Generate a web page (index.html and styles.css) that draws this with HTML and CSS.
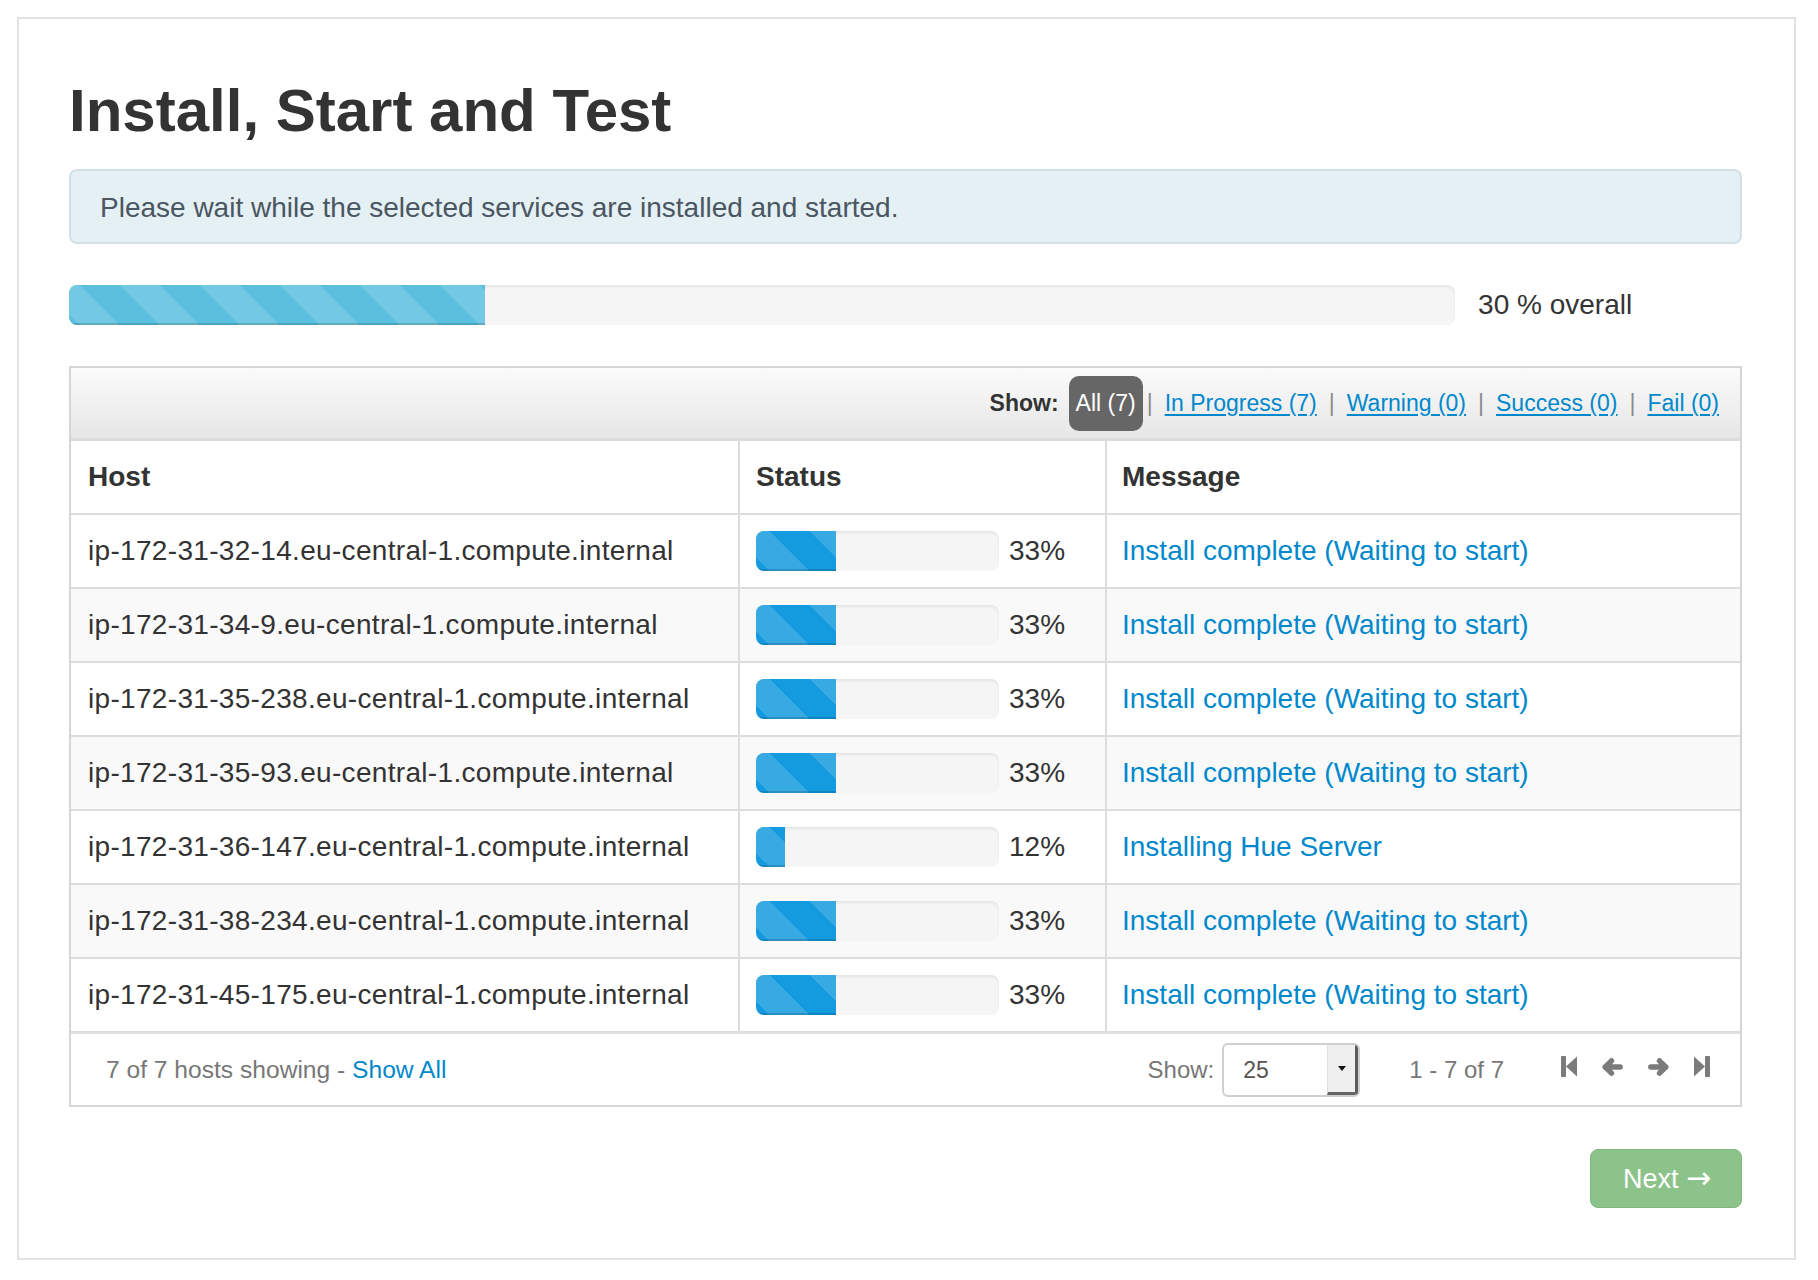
FILE: index.html
```html
<!DOCTYPE html>
<html lang="en">
<head>
<meta charset="utf-8">
<title>Install, Start and Test</title>
<link rel="stylesheet" href="styles.css">
</head>
<body>
<div class="page">
  <h2 class="title">Install, Start and Test</h2>
  <div class="alert">Please wait while the selected services are installed and started.</div>

  <div class="overall">
    <div class="progress progress-lg"><div class="bar bar-info" style="width:30%"></div></div>
    <div class="overall-label">30 % overall</div>
  </div>

  <div class="box">
    <div class="filter">
      <span class="show">Show:</span>
      <span class="badge">All (7)</span>
      <span class="sep sep-first">|</span>
      <a class="flink" href="#">In Progress (7)</a>
      <span class="sep">|</span>
      <a class="flink" href="#">Warning (0)</a>
      <span class="sep">|</span>
      <a class="flink" href="#">Success (0)</a>
      <span class="sep">|</span>
      <a class="flink" href="#">Fail (0)</a>
    </div>

    <table class="hosts">
      <thead>
        <tr><th class="c-host">Host</th><th class="c-status">Status</th><th class="c-msg">Message</th></tr>
      </thead>
      <tbody>
        <tr>
          <td class="c-host">ip-172-31-32-14.eu-central-1.compute.internal</td>
          <td class="c-status"><div class="status"><div class="progress progress-sm"><div class="bar bar-blue" style="width:33%"></div></div><span class="pct">33%</span></div></td>
          <td class="c-msg"><a class="msg" href="#">Install complete (Waiting to start)</a></td>
        </tr>
        <tr>
          <td class="c-host">ip-172-31-34-9.eu-central-1.compute.internal</td>
          <td class="c-status"><div class="status"><div class="progress progress-sm"><div class="bar bar-blue" style="width:33%"></div></div><span class="pct">33%</span></div></td>
          <td class="c-msg"><a class="msg" href="#">Install complete (Waiting to start)</a></td>
        </tr>
        <tr>
          <td class="c-host">ip-172-31-35-238.eu-central-1.compute.internal</td>
          <td class="c-status"><div class="status"><div class="progress progress-sm"><div class="bar bar-blue" style="width:33%"></div></div><span class="pct">33%</span></div></td>
          <td class="c-msg"><a class="msg" href="#">Install complete (Waiting to start)</a></td>
        </tr>
        <tr>
          <td class="c-host">ip-172-31-35-93.eu-central-1.compute.internal</td>
          <td class="c-status"><div class="status"><div class="progress progress-sm"><div class="bar bar-blue" style="width:33%"></div></div><span class="pct">33%</span></div></td>
          <td class="c-msg"><a class="msg" href="#">Install complete (Waiting to start)</a></td>
        </tr>
        <tr>
          <td class="c-host">ip-172-31-36-147.eu-central-1.compute.internal</td>
          <td class="c-status"><div class="status"><div class="progress progress-sm"><div class="bar bar-blue" style="width:12%"></div></div><span class="pct">12%</span></div></td>
          <td class="c-msg"><a class="msg" href="#">Installing Hue Server</a></td>
        </tr>
        <tr>
          <td class="c-host">ip-172-31-38-234.eu-central-1.compute.internal</td>
          <td class="c-status"><div class="status"><div class="progress progress-sm"><div class="bar bar-blue" style="width:33%"></div></div><span class="pct">33%</span></div></td>
          <td class="c-msg"><a class="msg" href="#">Install complete (Waiting to start)</a></td>
        </tr>
        <tr>
          <td class="c-host">ip-172-31-45-175.eu-central-1.compute.internal</td>
          <td class="c-status"><div class="status"><div class="progress progress-sm"><div class="bar bar-blue" style="width:33%"></div></div><span class="pct">33%</span></div></td>
          <td class="c-msg"><a class="msg" href="#">Install complete (Waiting to start)</a></td>
        </tr>
      </tbody>
    </table>

    <div class="footer">
      <div class="summary">7 of 7 hosts showing - <a class="show-all" href="#">Show All</a></div>
      <div class="pager">
        <span class="pager-label">Show:</span>
        <div class="select">
          <span class="select-val">25</span>
          <span class="select-btn"><span class="caret"></span></span>
        </div>
        <span class="range">1 - 7 of 7</span>
        <div class="pg-icons">
          <svg class="pg-icon" width="16" height="21" viewBox="0 0 16 21"><rect x="0" y="0" width="5" height="21" rx="0.8"/><path d="M16 0.5 L5 10.5 L16 20.5 Z"/></svg>
          <svg class="pg-icon" width="21" height="18" viewBox="0 0 21 18"><path d="M9.5 2.8 L3.2 9 L9.5 15.2 M3.2 9 H18.2" fill="none" stroke="currentColor" stroke-width="5.4" stroke-linecap="round" stroke-linejoin="round"/></svg>
          <svg class="pg-icon" width="21" height="18" viewBox="0 0 21 18"><path d="M11.5 2.8 L17.8 9 L11.5 15.2 M17.8 9 H2.8" fill="none" stroke="currentColor" stroke-width="5.4" stroke-linecap="round" stroke-linejoin="round"/></svg>
          <svg class="pg-icon" width="16" height="21" viewBox="0 0 16 21"><path d="M0 0.5 L11 10.5 L0 20.5 Z"/><rect x="11" y="0" width="5" height="21" rx="0.8"/></svg>
        </div>
      </div>
    </div>
  </div>

  <div class="actions">
    <button class="next" type="button">Next <span class="arrow">&rarr;</span></button>
  </div>
</div>
</body>
</html>
```

FILE: styles.css
```css
* {
  box-sizing: border-box;
}

html,
body {
  margin: 0;
  padding: 0;
  background: #fff;
}

body {
  font-family: "Liberation Sans", Arial, Helvetica, sans-serif;
  font-size: 28px;
  color: #333;
}

a {
  color: #0088cc;
  text-decoration: none;
}

.page {
  margin: 17px 22px 0 17px;
  border: 2px solid #e2e2e2;
  padding: 62px 52px 50px 50px;
}

.title {
  margin: 0;
  font-size: 60px;
  line-height: 60px;
  font-weight: bold;
  color: #333;
}

.alert {
  margin-top: 28px;
  background: #e5f0f5;
  border: 2px solid #d3dfe6;
  border-radius: 8px;
  padding: 19px 29px 17px;
  line-height: 35px;
  color: #4a5661;
}

.overall {
  margin-top: 41px;
  display: flex;
  align-items: flex-start;
}

.progress {
  background: #f5f5f5;
  border-radius: 8px;
  overflow: hidden;
  box-shadow: inset 0 2px 3px rgba(0, 0, 0, 0.07);
}

.progress-lg {
  width: 82.85%;
  height: 40px;
}

.progress-sm {
  width: 243px;
  height: 40px;
  flex: none;
}

.bar {
  height: 100%;
  background-size: 80px 80px;
  background-image: linear-gradient(45deg,
      rgba(255, 255, 255, 0.15) 25%, transparent 25%,
      transparent 50%, rgba(255, 255, 255, 0.15) 50%,
      rgba(255, 255, 255, 0.15) 75%, transparent 75%, transparent);
  box-shadow: inset 0 -2px 0 rgba(0, 0, 0, 0.15);
}

.bar-info {
  background-color: #5bc0de;
  background-position: 51px 0;
}

.bar-blue {
  background-color: #149bdf;
  background-position: 54px 0;
}

.overall-label {
  margin-left: 23px;
  line-height: 40px;
  color: #333;
}

/* table box */
.box {
  margin-top: 41px;
  border: 2px solid #d6d6d6;
}

.filter {
  display: flex;
  justify-content: flex-end;
  align-items: center;
  height: 73px;
  padding-right: 21px;
  background: linear-gradient(#fbfbfb, #e6e6e6);
  border-bottom: 3px solid #dcdcdc;
  font-size: 23px;
  line-height: 55px;
}

.show {
  font-weight: bold;
  color: #333;
  margin-right: 10px;
}

.badge {
  display: inline-block;
  height: 55px;
  padding: 0 7px;
  border-radius: 10px;
  background: #666;
  color: #fff;
}

.sep {
  color: #8a8a8a;
  margin: 0 12px 0 12px;
}

.sep-first {
  margin-left: 4px;
}

.flink {
  text-decoration: underline;
  text-underline-offset: 3px;
}

.hosts {
  width: 100%;
  border-collapse: separate;
  border-spacing: 0;
  table-layout: fixed;
}

.hosts th,
.hosts td {
  padding: 0;
  line-height: 72px;
  border-bottom: 2px solid #ddd;
  text-align: left;
  vertical-align: middle;
  white-space: nowrap;
}

.hosts th {
  font-weight: bold;
  color: #333;
}

.hosts th.c-host {
  width: 667px;
}

.hosts th.c-status {
  width: 367px;
}

.hosts .c-host {
  padding-left: 17px;
}

.hosts td.c-host {
  letter-spacing: 0.32px;
}

.hosts .c-status {
  padding-left: 16px;
  border-left: 2px solid #ddd;
}

.hosts .c-msg {
  padding-left: 15px;
  border-left: 2px solid #ddd;
}

.hosts tbody tr:nth-child(even) td {
  background: #f9f9f9;
}

.status {
  display: flex;
  align-items: center;
  height: 72px;
}

.pct {
  margin-left: 10px;
  color: #333;
}

.msg {
  color: #0088cc;
}

/* footer */
.footer {
  display: flex;
  align-items: center;
  height: 72px;
  border-top: 1px solid #e2e2e2;
  padding: 0 30px 0 35px;
  font-size: 24px;
  line-height: 30px;
  color: #777;
}

.summary {
  font-size: 24.6px;
}

.pager {
  margin-left: auto;
  display: flex;
  align-items: center;
}

.select {
  display: flex;
  width: 138px;
  height: 54px;
  margin-left: 8px;
  border: 2px solid #cfcfcf;
  border-radius: 6px;
  overflow: hidden;
  background: #fff;
}

.select-val {
  flex: 1;
  padding-left: 19px;
  line-height: 50px;
  font-size: 23px;
  color: #555;
}

.select-btn {
  width: 31px;
  display: flex;
  align-items: center;
  justify-content: center;
  background: #efefef;
  border-left: 1px solid #e0e0e0;
  border-right: 3px solid #5c5c5c;
  border-bottom: 3px solid #666;
}

.caret {
  width: 0;
  height: 0;
  border-left: 4px solid transparent;
  border-right: 4px solid transparent;
  border-top: 5px solid #111;
}

.range {
  margin-left: 49px;
}

.pg-icons {
  display: flex;
  align-items: center;
  margin-left: 57px;
  margin-bottom: 6px;
  color: #7b7b7b;
}

.pg-icon {
  display: block;
  fill: #7b7b7b;
  margin-left: 25px;
}

.pg-icon:first-child {
  margin-left: 0;
}

.actions {
  margin-top: 42px;
  display: flex;
  justify-content: flex-end;
}

.next {
  width: 152px;
  height: 59px;
  padding: 0 0 0 2px;
  background: #8cc38a;
  border: 1px solid #80b77e;
  border-radius: 8px;
  color: #fff;
  font-family: inherit;
  font-size: 27px;
}

.arrow {
  font-family: "DejaVu Sans", sans-serif;
  font-size: 30px;
  line-height: 1;
}
```
